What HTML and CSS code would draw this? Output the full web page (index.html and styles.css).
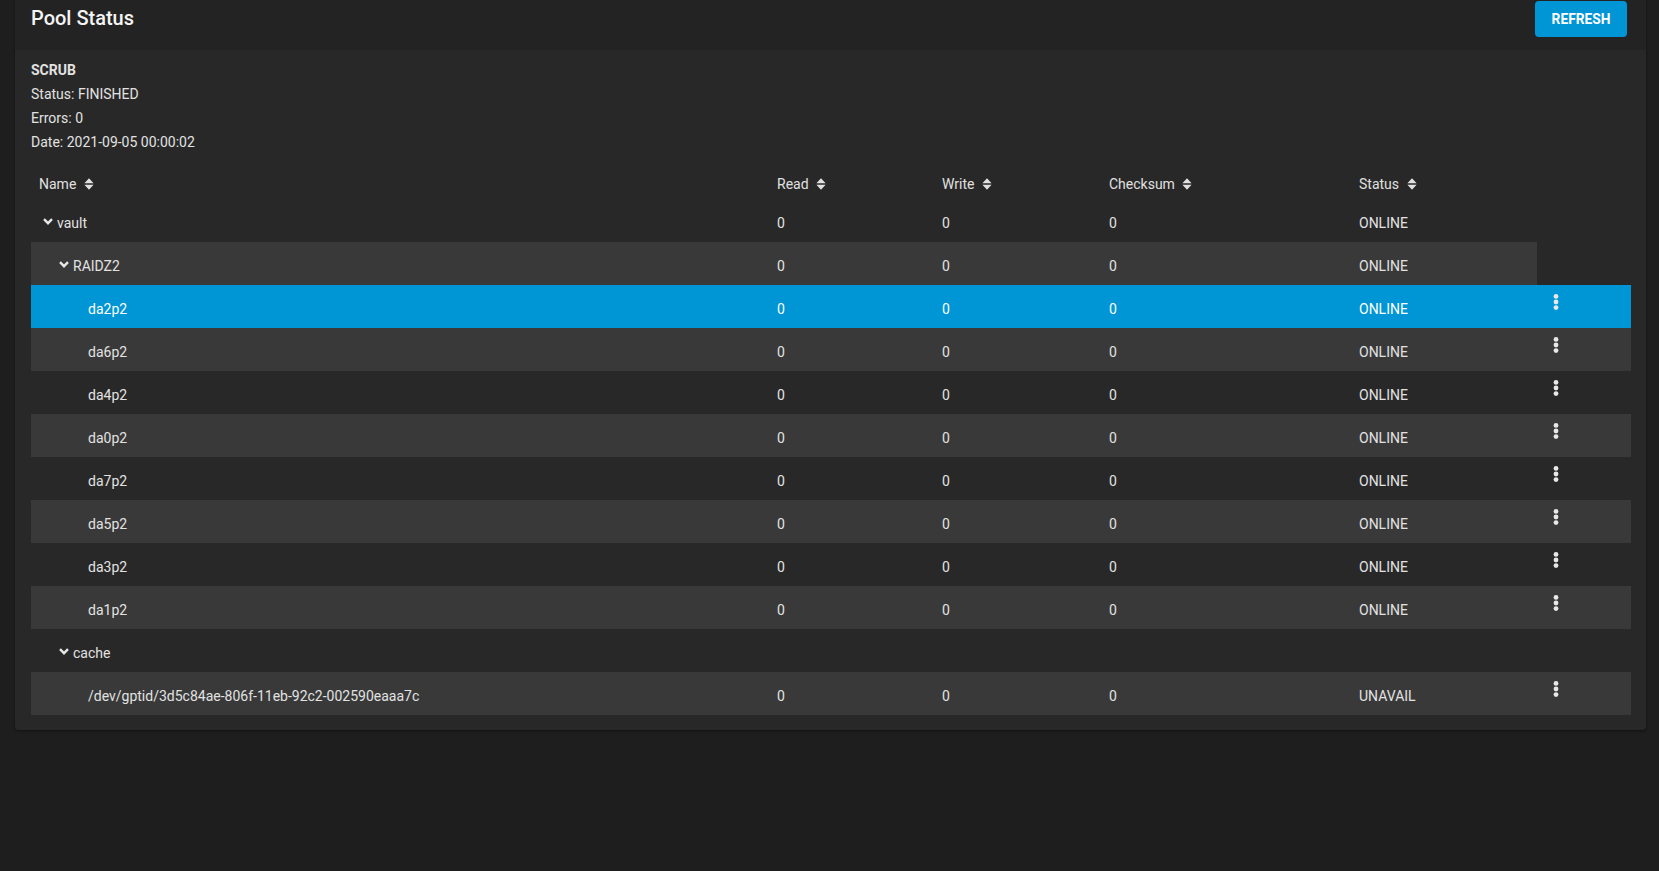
FILE: index.html
```html
<!DOCTYPE html>
<html lang="en">
<head>
    <meta charset="UTF-8">
    <title>Pool Status</title>
    <link rel="stylesheet" href="styles.css">
</head>
<body>
    <div class="card">
        <div class="card-header">
            <h1>Pool Status</h1>
            <button class="btn-refresh">REFRESH</button>
        </div>

        <div class="card-body">
            <!-- scrub info -->
            <div class="scrub">
                <div class="scrub-title">SCRUB</div>
                <div>Status: FINISHED</div>
                <div>Errors: 0</div>
                <div>Date: 2021-09-05 00:00:02</div>
            </div>

            <table class="pool-table">
                <colgroup>
                    <col class="c-name">
                    <col class="c-read">
                    <col class="c-write">
                    <col class="c-sum">
                    <col class="c-status">
                    <col class="c-action">
                </colgroup>
                <thead>
                    <tr>
                        <th>Name <svg class="sort" viewBox="0 0 10 12"><path d="M5 0.3L9.6 5.2H0.4z M0.4 6.8H9.6L5 11.7z"/></svg></th>
                        <th>Read <svg class="sort" viewBox="0 0 10 12"><path d="M5 0.3L9.6 5.2H0.4z M0.4 6.8H9.6L5 11.7z"/></svg></th>
                        <th>Write <svg class="sort" viewBox="0 0 10 12"><path d="M5 0.3L9.6 5.2H0.4z M0.4 6.8H9.6L5 11.7z"/></svg></th>
                        <th>Checksum <svg class="sort" viewBox="0 0 10 12"><path d="M5 0.3L9.6 5.2H0.4z M0.4 6.8H9.6L5 11.7z"/></svg></th>
                        <th>Status <svg class="sort" viewBox="0 0 10 12"><path d="M5 0.3L9.6 5.2H0.4z M0.4 6.8H9.6L5 11.7z"/></svg></th>
                        <th></th>
                    </tr>
                </thead>
                <tbody>
                    <tr>
                        <td><span class="lvl0"><svg class="chev" viewBox="0 0 10 7"><path d="M1 1.2L5 5.2 9 1.2"/></svg>vault</span></td>
                        <td>0</td><td>0</td><td>0</td><td>ONLINE</td>
                    </tr>
                    <tr class="alt">
                        <td><span class="lvl1"><svg class="chev" viewBox="0 0 10 7"><path d="M1 1.2L5 5.2 9 1.2"/></svg>RAIDZ2</span></td>
                        <td>0</td><td>0</td><td>0</td><td>ONLINE</td>
                    </tr>
                    <tr class="selected">
                        <td><span class="leaf">da2p2</span></td>
                        <td>0</td><td>0</td><td>0</td><td>ONLINE</td>
                        <td class="action"><svg class="kebab" viewBox="0 0 24 24"><circle cx="12" cy="6.4" r="2.4"/><circle cx="12" cy="12" r="2.4"/><circle cx="12" cy="17.6" r="2.4"/></svg></td>
                    </tr>
                    <tr class="alt">
                        <td><span class="leaf">da6p2</span></td>
                        <td>0</td><td>0</td><td>0</td><td>ONLINE</td>
                        <td class="action"><svg class="kebab" viewBox="0 0 24 24"><circle cx="12" cy="6.4" r="2.4"/><circle cx="12" cy="12" r="2.4"/><circle cx="12" cy="17.6" r="2.4"/></svg></td>
                    </tr>
                    <tr>
                        <td><span class="leaf">da4p2</span></td>
                        <td>0</td><td>0</td><td>0</td><td>ONLINE</td>
                        <td class="action"><svg class="kebab" viewBox="0 0 24 24"><circle cx="12" cy="6.4" r="2.4"/><circle cx="12" cy="12" r="2.4"/><circle cx="12" cy="17.6" r="2.4"/></svg></td>
                    </tr>
                    <tr class="alt">
                        <td><span class="leaf">da0p2</span></td>
                        <td>0</td><td>0</td><td>0</td><td>ONLINE</td>
                        <td class="action"><svg class="kebab" viewBox="0 0 24 24"><circle cx="12" cy="6.4" r="2.4"/><circle cx="12" cy="12" r="2.4"/><circle cx="12" cy="17.6" r="2.4"/></svg></td>
                    </tr>
                    <tr>
                        <td><span class="leaf">da7p2</span></td>
                        <td>0</td><td>0</td><td>0</td><td>ONLINE</td>
                        <td class="action"><svg class="kebab" viewBox="0 0 24 24"><circle cx="12" cy="6.4" r="2.4"/><circle cx="12" cy="12" r="2.4"/><circle cx="12" cy="17.6" r="2.4"/></svg></td>
                    </tr>
                    <tr class="alt">
                        <td><span class="leaf">da5p2</span></td>
                        <td>0</td><td>0</td><td>0</td><td>ONLINE</td>
                        <td class="action"><svg class="kebab" viewBox="0 0 24 24"><circle cx="12" cy="6.4" r="2.4"/><circle cx="12" cy="12" r="2.4"/><circle cx="12" cy="17.6" r="2.4"/></svg></td>
                    </tr>
                    <tr>
                        <td><span class="leaf">da3p2</span></td>
                        <td>0</td><td>0</td><td>0</td><td>ONLINE</td>
                        <td class="action"><svg class="kebab" viewBox="0 0 24 24"><circle cx="12" cy="6.4" r="2.4"/><circle cx="12" cy="12" r="2.4"/><circle cx="12" cy="17.6" r="2.4"/></svg></td>
                    </tr>
                    <tr class="alt">
                        <td><span class="leaf">da1p2</span></td>
                        <td>0</td><td>0</td><td>0</td><td>ONLINE</td>
                        <td class="action"><svg class="kebab" viewBox="0 0 24 24"><circle cx="12" cy="6.4" r="2.4"/><circle cx="12" cy="12" r="2.4"/><circle cx="12" cy="17.6" r="2.4"/></svg></td>
                    </tr>
                    <tr>
                        <td><span class="lvl1"><svg class="chev" viewBox="0 0 10 7"><path d="M1 1.2L5 5.2 9 1.2"/></svg>cache</span></td>
                        <td></td><td></td><td></td><td></td>
                    </tr>
                    <tr class="alt">
                        <td><span class="leaf">/dev/gptid/3d5c84ae-806f-11eb-92c2-002590eaaa7c</span></td>
                        <td>0</td><td>0</td><td>0</td><td>UNAVAIL</td>
                        <td class="action"><svg class="kebab" viewBox="0 0 24 24"><circle cx="12" cy="6.4" r="2.4"/><circle cx="12" cy="12" r="2.4"/><circle cx="12" cy="17.6" r="2.4"/></svg></td>
                    </tr>
                </tbody>
            </table>
        </div>
    </div>
</body>
</html>
```

FILE: styles.css
```css
* {
    margin: 0;
    padding: 0;
    box-sizing: border-box;
}

body {
    font-family: Roboto, "Liberation Sans", Arial, sans-serif;
    background: #1e1e1e;
    color: #e2e2e2;
    padding: 0 13px 0 15px;
    min-height: 100vh;
    font-size: 14px;
}

.card {
    background: #282828;
    border-radius: 0 0 4px 4px;
    box-shadow: 0 1px 3px rgba(0, 0, 0, 0.45);
}

.card-header {
    background: #232323;
    height: 50px;
    display: flex;
    justify-content: space-between;
    align-items: flex-start;
    padding: 0 19px 0 16px;
}

.card-header h1 {
    font-size: 20px;
    font-weight: 500;
    color: #f4f4f4;
    line-height: 24px;
    margin-top: 6px;
}

.btn-refresh {
    margin-top: 1px;
    width: 92px;
    height: 36px;
    background: #0095d5;
    color: #fff;
    border: none;
    border-radius: 4px;
    font-family: inherit;
    font-size: 13.75px;
    font-weight: 700;
    cursor: pointer;
}

.card-body {
    padding: 8px 15px 15px 16px;
}

.scrub {
    line-height: 24px;
}

.scrub-title {
    font-weight: 700;
}

.pool-table {
    width: 100%;
    table-layout: fixed;
    border-collapse: collapse;
    margin-top: 11px;
    text-align: left;
}

.c-name { width: 738px; }
.c-read { width: 165px; }
.c-write { width: 167px; }
.c-sum { width: 250px; }
.c-status { width: 186px; }
.c-action { width: 94px; }

.pool-table th {
    font-weight: 400;
    height: 34px;
    padding: 3px 8px 0;
    white-space: nowrap;
    color: #e0e0e0;
}

.sort {
    width: 10px;
    height: 12px;
    fill: #e0e0e0;
    margin-left: 4px;
    vertical-align: -1px;
}

.pool-table td {
    height: 43px;
    padding: 4px 8px 0;
    white-space: nowrap;
    vertical-align: middle;
}

.pool-table tr.alt td {
    background: #393939;
}

.pool-table tr.selected td {
    background: #0095d5;
    color: #fff;
}

.lvl0 { padding-left: 4px; }
.lvl1 { padding-left: 20px; }
.leaf { padding-left: 49px; }

.chev {
    width: 10px;
    height: 7px;
    fill: none;
    stroke: #e6e6e6;
    stroke-width: 2.4;
    margin-right: 4px;
    vertical-align: 3px;
}

.pool-table td.action {
    vertical-align: top;
    padding: 5px 0 0 7px;
}

.kebab {
    width: 24px;
    height: 24px;
    fill: #e8e8e8;
    display: block;
}
```
